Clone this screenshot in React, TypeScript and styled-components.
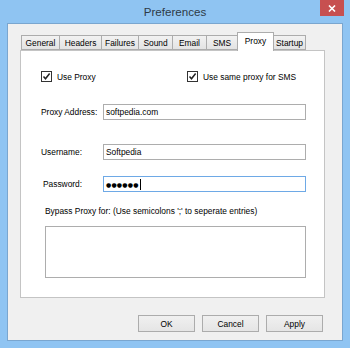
import React from "react";
import styled, { createGlobalStyle } from "styled-components";

const Global = createGlobalStyle`
  html, body { margin: 0; padding: 0; }
  body { width: 350px; height: 348px; overflow: hidden; font-family: "Liberation Sans", Arial, sans-serif; }
`;

const Frame = styled.div`
  width: 350px;
  height: 348px;
  box-sizing: border-box;
  background: #8fc4f2;
  display: flex;
  flex-direction: column;
  padding: 0 7px 7px 7px;
`;

const TitleBar = styled.div`
  height: 23px;
  display: grid;
  grid-template-columns: 1fr auto 1fr;
  align-items: start;
  margin: 0 -7px;
`;

const Title = styled.div`
  grid-column: 2;
  font-size: 11.6px;
  color: #2e3a46;
  line-height: 24px;
`;

const Close = styled.div`
  grid-column: 3;
  justify-self: end;
  margin-right: 6px;
  width: 24px;
  height: 16px;
  background: #c75050;
  color: #fff;
  display: flex;
  align-items: center;
  justify-content: center;
`;

const Client = styled.div`
  flex: 1;
  background: #f0f0f0;
  border: 1px solid #7aa6cf;
  box-sizing: border-box;
  display: flex;
  flex-direction: column;
  padding-top: 8px;
  font-size: 8.4px;
  color: #000;
`;

const TabStrip = styled.div`
  display: flex;
  align-items: flex-end;
  height: 18px;
  padding-left: 13px;
  position: relative;
  z-index: 1;
`;

const Tab = styled.div<{ $w: number; $active?: boolean }>`
  width: ${(p) => p.$w}px;
  height: ${(p) => (p.$active ? 19 : 15)}px;
  margin-left: -1px;
  margin-bottom: ${(p) => (p.$active ? -1 : 0)}px;
  box-sizing: border-box;
  border: 1px solid #acacac;
  border-bottom: ${(p) => (p.$active ? "none" : "1px solid #acacac")};
  background: ${(p) => (p.$active ? "#ffffff" : "linear-gradient(#f2f2f2, #e3e3e3)")};
  display: flex;
  align-items: ${(p) => (p.$active ? "flex-start" : "center")};
  padding-top: ${(p) => (p.$active ? 3 : 0)}px;
  justify-content: center;
  font-size: 8.4px;
  &:first-child { margin-left: 0; }
`;

const Panel = styled.div`
  margin: 0 17px 0 12px;
  height: 248px;
  box-sizing: border-box;
  background: #fff;
  border: 1px solid #c4c4c4;
  display: flex;
  flex-direction: column;
  padding: 0 18px 0 20px;
`;

const CheckRow = styled.div`
  display: grid;
  grid-template-columns: 146px auto;
  margin-top: 20px;
  height: 11px;
`;

const Check = styled.label`
  display: flex;
  align-items: center;
  gap: 5px;
  white-space: nowrap;
`;

const Box = styled.span`
  width: 11px;
  height: 11px;
  box-sizing: border-box;
  border: 1px solid #333;
  background: #fff;
  display: flex;
  align-items: center;
  justify-content: center;
`;

const FieldRow = styled.div<{ $top: number; $shift?: number }>`
  display: grid;
  grid-template-columns: 62px 1fr;
  align-items: center;
  margin-top: ${(p) => p.$top}px;
  height: 16px;
  & > span { padding-left: ${(p) => p.$shift || 0}px; }
`;

const Input = styled.div<{ $focus?: boolean }>`
  height: 16px;
  box-sizing: border-box;
  border: 1px solid ${(p) => (p.$focus ? "#6ea9e6" : "#adadad")};
  background: #fff;
  padding-left: 2px;
  display: flex;
  align-items: center;
  white-space: nowrap;
`;

const Dots = styled.span`
  font-family: "DejaVu Sans", sans-serif;
  font-size: 6px;
  letter-spacing: 0.2px;
`;

const Caret = styled.span`
  width: 1px;
  height: 11px;
  background: #000;
  margin-left: 1px;
`;

const Note = styled.div`
  margin-top: 14px;
  padding-left: 4px;
  height: 11px;
  line-height: 11px;
  white-space: nowrap;
`;

const Area = styled.div`
  margin: 9px 0 0 4px;
  height: 52px;
  box-sizing: border-box;
  border: 1px solid #adadad;
  background: #fff;
`;

const ButtonRow = styled.div`
  display: flex;
  justify-content: flex-end;
  gap: 7px;
  margin-top: 17px;
  padding-right: 19px;
`;

const Button = styled.div`
  width: 57px;
  height: 17px;
  box-sizing: border-box;
  border: 1px solid #acacac;
  background: linear-gradient(#f0f0f0, #e5e5e5);
  display: flex;
  align-items: center;
  justify-content: center;
  font-size: 8.4px;
`;

const tabs: [string, number][] = [
  ["General", 39],
  ["Headers", 43],
  ["Failures", 38],
  ["Sound", 35],
  ["Email", 35],
  ["SMS", 32],
  ["Proxy", 37],
  ["Startup", 33],
];

const Tick = () => (
  <svg width="9" height="9" viewBox="0 0 9 9">
    <path d="M1.5 4.5 L3.5 6.8 L7.6 1.5" fill="none" stroke="#222" strokeWidth="1.5" />
  </svg>
);

export default function App() {
  return (
    <>
      <Global />
      <Frame>
        <TitleBar>
          <Title>Preferences</Title>
          <Close>
            <svg width="8" height="7" viewBox="0 0 8 7">
              <path d="M1 0.5 L7 6.5 M7 0.5 L1 6.5" stroke="#fff" strokeWidth="1.6" />
            </svg>
          </Close>
        </TitleBar>
        <Client>
          <TabStrip>
            {tabs.map(([t, w]) => (
              <Tab key={t} $w={w} $active={t === "Proxy"}>
                {t}
              </Tab>
            ))}
          </TabStrip>
          <Panel>
            <CheckRow>
              <Check>
                <Box><Tick /></Box>
                Use Proxy
              </Check>
              <Check>
                <Box><Tick /></Box>
                Use same proxy for SMS
              </Check>
            </CheckRow>
            <FieldRow $top={22}>
              <span>Proxy Address:</span>
              <Input>softpedia.com</Input>
            </FieldRow>
            <FieldRow $top={24}>
              <span>Username:</span>
              <Input>Softpedia</Input>
            </FieldRow>
            <FieldRow $top={16} $shift={2}>
              <span>Password:</span>
              <Input $focus>
                <Dots>●●●●●●</Dots>
                <Caret />
              </Input>
            </FieldRow>
            <Note>Bypass Proxy for: (Use semicolons ';' to seperate entries)</Note>
            <Area />
          </Panel>
          <ButtonRow>
            <Button>OK</Button>
            <Button>Cancel</Button>
            <Button>Apply</Button>
          </ButtonRow>
        </Client>
      </Frame>
    </>
  );
}
